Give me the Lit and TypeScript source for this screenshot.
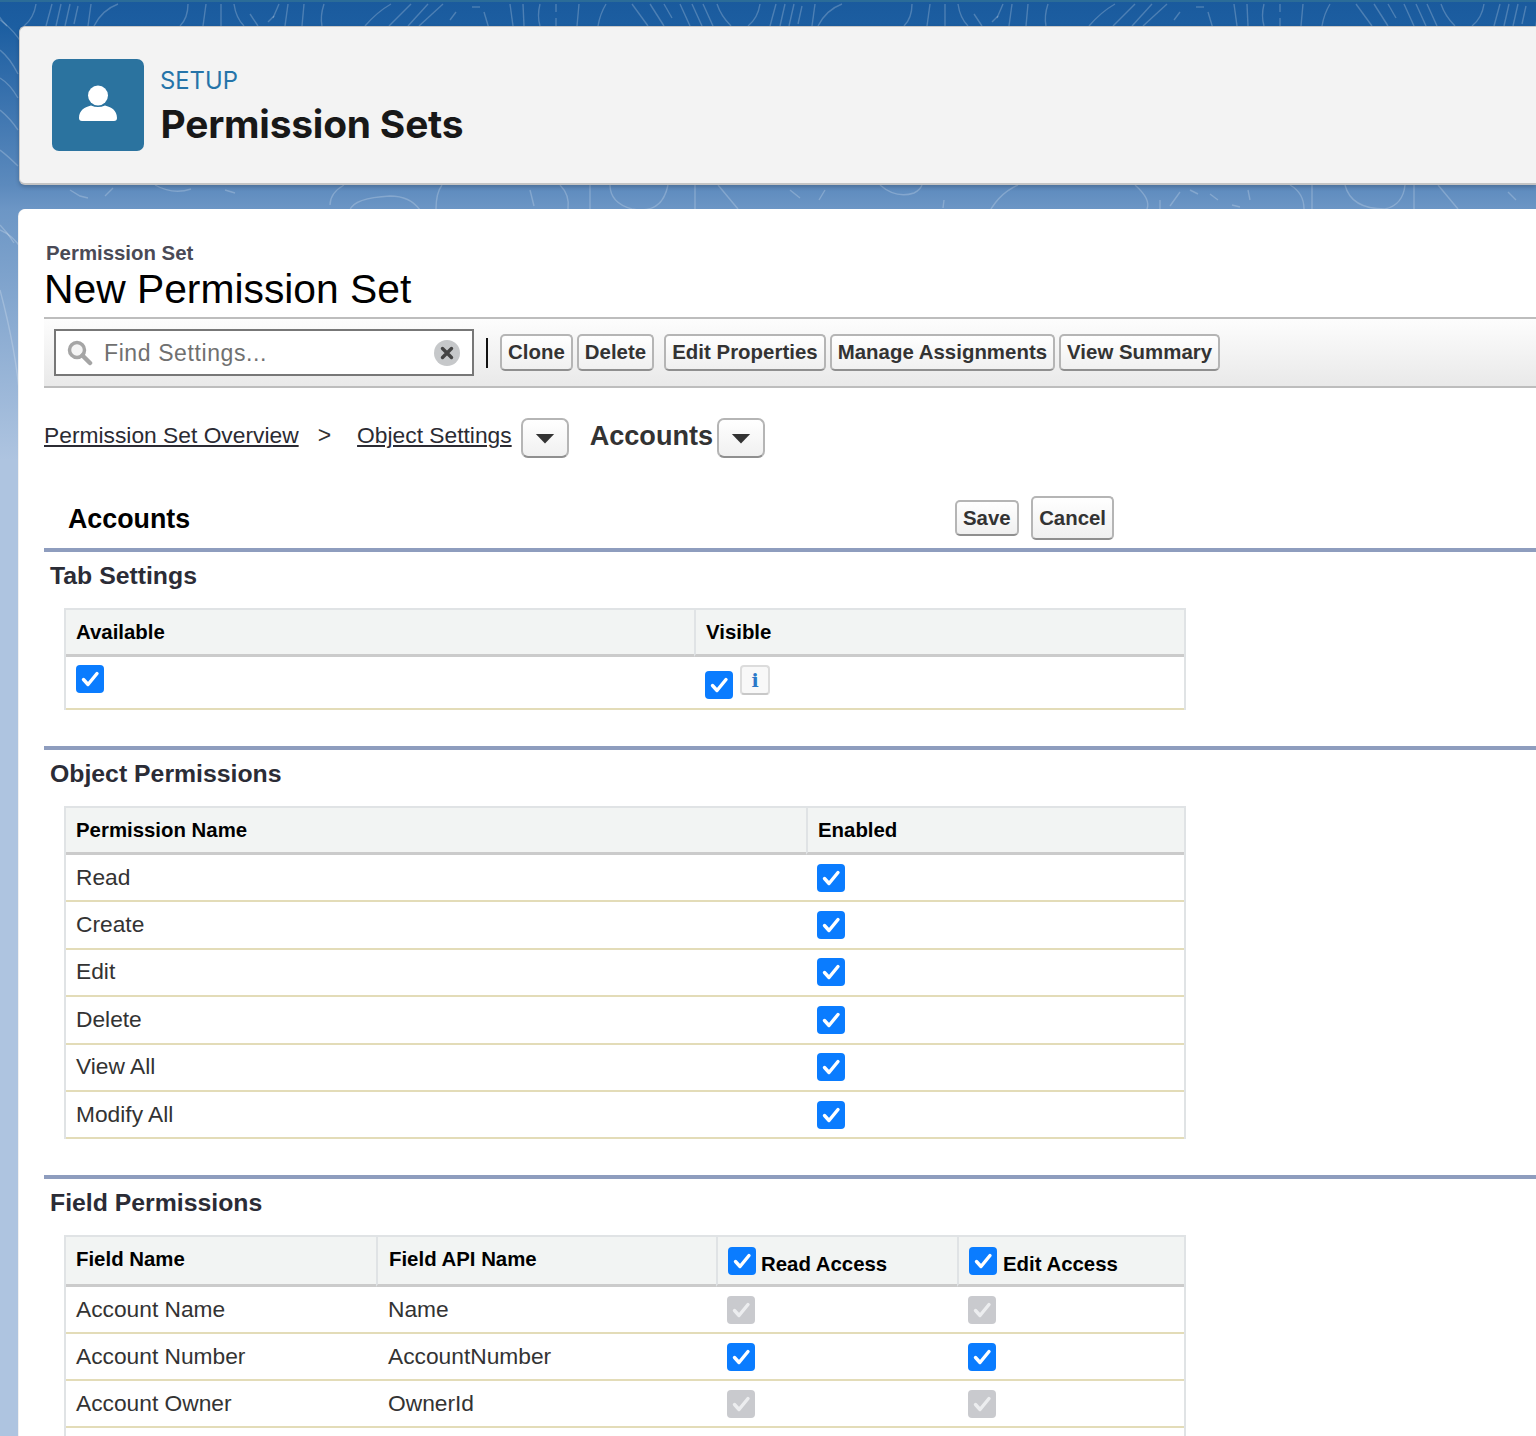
import { LitElement, html, css, svg } from "lit";
import { customElement } from "lit/decorators.js";

const check = (kind: string) => html`<span class="cb ${kind}"><svg viewBox="0 0 28 28" width="28" height="28"><path d="M7.5 14.5l4.5 5L21 8.5" fill="none" stroke-width="3.4" stroke-linecap="round" stroke-linejoin="round"/></svg></span>`;
const caret = html`<button class="drop"><svg viewBox="0 0 20 12" width="20" height="11"><path d="M0 1h20L10 11.5z" fill="#333"/></svg></button>`;

const topLines: string[] = [];
for (const off of [0, 724, -724]) {
  for (const d of [
    "M510 4l3 22","M523 4l1 22","M540 4q-3 12 0 22","M556 4v8M556 18v8","M579 4l-2 22","M606 4q-6 10-8 22",
    "M632 4l16 22","M650 4l14 22","M664 4l8 14","M680 4l10 22","M692 4l10 22","M703 4l10 22","M717 4q4 12 14 22",
    "M760 4q-2 14-12 22","M776 4l-6 22","M785 4l-5 22","M794 4l-5 22","M802 6l-4 18","M815 4l-3 22","M842 4q-16 6-24 22",
    "M912 4q0 14-8 22","M930 4l-3 22","M945 4v22","M958 4q2 14 10 22","M974 14l8 12","M992 22l6-6","M1003 4l-6 14",
    "M1012 4l-3 22","M1028 4l-2 22","M1048 4q-4 12-2 22","M1115 4q-14 8-26 22","M1135 4l-22 22","M1152 4l-20 22","M1167 4l-24 22","M1180 12l-6 8","M1196 7h8","M1208 12l6 20",
  ]) topLines.push(`translate(${off} 0)|${d}`);
}

const midLines = [
  "M530 190l4 16","M560 185q10 10 8 24","M590 185v24","M610 185q0 18 22 24q30 6 36-24","M695 185v24","M718 185l20 24",
  "M790 190l10 8M806 212h10M825 190l-6 10","M880 185q16 14 34 8q6-3 8-8","M944 200l-1 8","M1018 185q-22 10-32 34M1040 240q0-30 36-30q30 0 40 30",
  "M1135 185q16 14 12 24M1160 200v12M1180 192l-10 14M1190 190l8 4M1210 194l8 6M1232 205l8 2M1248 190l2 10",
  "M1290 185q14 8 14 24M1312 185v24M1345 185q6 24 40 24q18-4 20-24","M1414 185v24","M1438 185l20 24","M1508 192l8 8M1526 210h8",
  "M70 190l10 6 8 2M105 196l8-8M155 185q18 10 36 4M225 190l10 3M330 205q0-12 14-20M350 210q4-12 40-14q20 0 30 14M442 185q-6 8-6 24",
  "M0 230q14 6 22 20","M0 290q16 60 20 110",
];

const bottomLeft = ["M0 20q20 14 30 40","M0 50q10 8 18 24","M0 78q10 6 18 20","M0 110q10 8 18 20","M0 150q8 6 18 16","M0 225q8 8 14 18"];

@customElement("app-root")
export class AppRoot extends LitElement {
  static styles = css`
    :host { display: block; font-family: "Liberation Sans", Arial, sans-serif; }
    * { box-sizing: border-box; }
    .page { position: relative; width: 1536px; height: 1436px; overflow: hidden;
      background: linear-gradient(180deg, #1a5a9d 0, #1c5ea1 26px, #5c8abd 185px, #6c96c5 209px, #aec4e0 460px, #aec4e0 100%);
      padding: 26px 0 0 19px; }
    .top-edge { position: absolute; top: 0; left: 0; width: 100%; height: 2px; background: #2b6c98; }
    .bg { position: absolute; inset: 0; width: 1536px; height: 1436px; }
    .bg path { fill: none; stroke: #fff; stroke-opacity: .22; stroke-width: 1.4; }
    .head { position: relative; height: 159px; background: #f3f3f3; border-radius: 6px 0 0 6px;
      border-top: 1px solid #c9c9c9; border-left: 1px solid #c9c9c9; border-bottom: 2px solid #c4c4c4;
      box-shadow: 0 2px 4px rgba(0,0,0,.2); display: flex; align-items: center; padding-left: 32px; gap: 16px; }
    .logo { width: 92px; height: 92px; border-radius: 7px; background: #2b739f; display: flex; align-items: center; justify-content: center; }
    .head-text { display: flex; flex-direction: column; padding-top: 5px; }
    .setup { font: 400 23.8px/28px Inter, sans-serif; color: #2574a9; }
    .title { font: 700 38.9px/48px Inter, sans-serif; color: #181818; margin: 5px 0 0 .5px; letter-spacing: -.2px; }
    .card { position: relative; margin-top: 24px; height: 1300px; background: #fff; border-radius: 7px 0 0 0;
      padding: 32px 0 0 25px; box-shadow: -1px 0 0 #f0f0f0; }
    .eyebrow { font: 700 20.4px/24px "Liberation Sans", sans-serif; color: #4a4a56; margin-left: 2px; }
    h1 { margin: 0; font: 400 40.8px/48px "Liberation Sans", sans-serif; color: #000; height: 52px; }
    .toolbar { height: 71px; border-top: 2px solid #bdbdbd; border-bottom: 2px solid #bdbdbd;
      background: linear-gradient(180deg, #fdfdfd, #e9e9e9); display: flex; align-items: center; padding-left: 10px; }
    .search { width: 420px; height: 47px; border: 2px solid #777; background: #fff; display: flex; align-items: center;
      padding: 0 12px 0 11px; }
    .search .ph { font: 400 23px/28px "Liberation Sans", sans-serif; color: #707070; margin-left: 11px; flex: 1; letter-spacing: .6px; }
    .sep { width: 2px; height: 30px; background: #111; margin: 0 12px; }
    button { font: 700 20.4px/24px "Liberation Sans", sans-serif; color: #333; background: linear-gradient(180deg, #fff, #f0f0f0);
      border: 2px solid #b5b5b5; border-bottom-color: #8f8f8f; border-radius: 5px; padding: 0 6px; height: 37px; white-space: nowrap; }
    .btns { display: flex; align-items: center; }
    .btns button { margin-right: 4px; padding-bottom: 2px; letter-spacing: .03px; }
    .btns button.gap { margin-right: 10px; }
    .crumbs { height: 100px; display: flex; align-items: center; font: 400 22.8px/28px "Liberation Sans", sans-serif; color: #333; }
    .crumbs a { color: #2b2b33; text-decoration: underline; margin-top: -6px; }
    .gt { margin: -6px 26px 0 19px; font-size: 23px; }
    .drop { width: 48px; height: 40px; padding: 0; flex: none; display: inline-flex; align-items: center; justify-content: center; margin-left: 9px; border-radius: 7px; }
    .crumbs strong { font: 700 27.1px/34px "Liberation Sans", sans-serif; color: #333; margin-left: 21px; margin-top: -4px; }
    .crumbs strong + .drop { margin-left: 4px; }
    .titlebar { height: 60px; display: flex; align-items: center; padding-left: 24px; position: relative; width: 1070px; }
    .titlebar h2 { margin: 0; font: 700 26.8px/34px "Liberation Sans", sans-serif; color: #000; flex: 1; padding-top: 2px; }
    .titlebar button.save { height: 36px; margin-right: 12px; padding: 0 6.5px; }
    .titlebar button.cancel { height: 44px; padding: 0 6px; }
    .section { border-top: 4px solid #8e9dbe; }
    .section h3 { margin: 0; font: 700 24.8px/30px "Liberation Sans", sans-serif; color: #2b2c36; padding: 9px 0 0 6px; height: 56px; }
    table { margin-left: 20px; width: 1122px; table-layout: fixed; border-collapse: separate; border-spacing: 0;
      border: 2px solid #e0e3e5; border-bottom: 0; background: #fff; }
    th { background: #f2f4f3; font: 700 20.4px/24px "Liberation Sans", sans-serif; color: #000; text-align: left; padding: 0 10px;
      border-bottom: 3px solid #cbcbcb; border-left: 2px solid #e0e3e5; }
    th:first-child { border-left: 0; }
    td { font: 400 22.75px/28px "Liberation Sans", sans-serif; color: #333; padding: 0 10px; border-bottom: 2px solid #e3dcb8; }
    .cb { display: inline-block; width: 28px; height: 28px; border-radius: 4px; vertical-align: middle; }
    .cb svg { display: block; }
    .cb.on { background: #0a7cff; }
    .cb.on path { stroke: #fff; }
    .cb.off { background: #c9cace; }
    .cb.off path { stroke: #ecedef; }
    .tab { margin-bottom: 36px; }
    .tab th { height: 47px; }
    .tab td { height: 53px; }
    .tab td.v { padding-left: 11px; }
    .tab .nudge { display: inline-flex; align-items: flex-start; gap: 7px; padding-top: 11px; }
    .tab .first { display: block; margin-top: -8px; }
    .info { width: 30px; height: 30px; border: 2px solid #dcdcdc; border-bottom-color: #c8c8c8; border-radius: 4px; background: #f8f8f8;
      font: 700 19px/26px "DejaVu Serif", serif; color: #2a78c8; text-align: center; margin-top: -6px; }
    .obj { margin-bottom: 36px; }
    .obj th { height: 47px; padding-bottom: 1px; }
    .obj td { height: 47.4px; padding-bottom: 2px; }
    .obj td.c { padding-left: 11px; }
    .fld th { height: 50px; padding-bottom: 4px; }
    .fld th.api { padding-left: 11px; }
    .fld th.chk { padding: 0 0 0 10px; }
    .hd { display: flex; align-items: center; gap: 5px; }
    .hd .l { padding-top: 6px; }
    .fld th:last-child .hd { gap: 6px; }
    .fld td { height: 47px; padding-bottom: 2px; }
    .fld td.api { padding-left: 12px; }
    .fld td.c { padding-left: 11px; }
  `;

  render() {
    const objs = ["Read", "Create", "Edit", "Delete", "View All", "Modify All"];
    const flds: [string, string, boolean][] = [
      ["Account Name", "Name", false],
      ["Account Number", "AccountNumber", true],
      ["Account Owner", "OwnerId", false],
      ["", "", true],
    ];
    return html`<div class="page">
      <div class="top-edge"></div>
      <svg class="bg" viewBox="0 0 1536 1436">
        ${topLines.map((s) => { const [t, d] = s.split("|"); return svg`<path transform=${t} d=${d}></path>`; })}
        ${midLines.map((d) => svg`<path d=${d}></path>`)}
        ${bottomLeft.map((d) => svg`<path d=${d}></path>`)}
      </svg>
      <div class="head">
        <div class="logo"><svg width="40" height="42" viewBox="0 0 40 42"><circle cx="20" cy="11.5" r="10" fill="#fff"/><path d="M1 34c0-8 6-11 12-12.500q7 3 14 0C33 23 39 26 39 34c0 2-1 3-3 3H4c-2 0-3-1-3-3z" fill="#fff"/></svg></div>
        <div class="head-text"><div class="setup">SETUP</div><div class="title">Permission Sets</div></div>
      </div>
      <div class="card">
        <div class="eyebrow">Permission Set</div>
        <h1>New Permission Set</h1>
        <div class="toolbar">
          <div class="search">
            <svg width="26" height="26" viewBox="0 0 26 26"><circle cx="10" cy="10" r="7.500" fill="#f4f4f4" stroke="#a5a5a5" stroke-width="3.500"/><path d="M15.500 15.500L23 23" stroke="#a5a5a5" stroke-width="4.500" stroke-linecap="round"/></svg>
            <span class="ph">Find Settings...</span>
            <svg width="26" height="26" viewBox="0 0 26 26"><circle cx="13" cy="13" r="13" fill="#c6c8ca"/><path d="M8.500 8.500l9 9M17.500 8.500l-9 9" stroke="#444" stroke-width="3.400" stroke-linecap="round"/></svg>
          </div>
          <div class="sep"></div>
          <div class="btns">
            <button>Clone</button><button class="gap">Delete</button><button>Edit Properties</button><button>Manage Assignments</button><button>View Summary</button>
          </div>
        </div>
        <div class="crumbs">
          <a>Permission Set Overview</a><span class="gt">&gt;</span><a>Object Settings</a>${caret}<strong>Accounts</strong>${caret}
        </div>
        <div class="titlebar"><h2>Accounts</h2><button class="save">Save</button><button class="cancel">Cancel</button></div>
        <div class="section">
          <h3>Tab Settings</h3>
          <table class="tab">
            <colgroup><col style="width:628px"/><col/></colgroup>
            <tr><th>Available</th><th>Visible</th></tr>
            <tr><td><span class="first">${check("on")}</span></td><td class="v"><span class="nudge">${check("on")}<span class="info">i</span></span></td></tr>
          </table>
        </div>
        <div class="section">
          <h3>Object Permissions</h3>
          <table class="obj">
            <colgroup><col style="width:740px"/><col/></colgroup>
            <tr><th>Permission Name</th><th>Enabled</th></tr>
            ${objs.map((o) => html`<tr><td>${o}</td><td class="c">${check("on")}</td></tr>`)}
          </table>
        </div>
        <div class="section">
          <h3>Field Permissions</h3>
          <table class="fld">
            <colgroup><col style="width:310px"/><col style="width:340px"/><col style="width:241px"/><col/></colgroup>
            <tr><th>Field Name</th><th class="api">Field API Name</th><th class="chk"><div class="hd">${check("on")}<span class="l">Read Access</span></div></th><th class="chk"><div class="hd">${check("on")}<span class="l">Edit Access</span></div></th></tr>
            ${flds.map(([a, b, on]) => html`<tr><td>${a}</td><td class="api">${b}</td><td class="c">${check(on ? "on" : "off")}</td><td class="c">${check(on ? "on" : "off")}</td></tr>`)}
          </table>
        </div>
      </div>
    </div>`;
  }
}
